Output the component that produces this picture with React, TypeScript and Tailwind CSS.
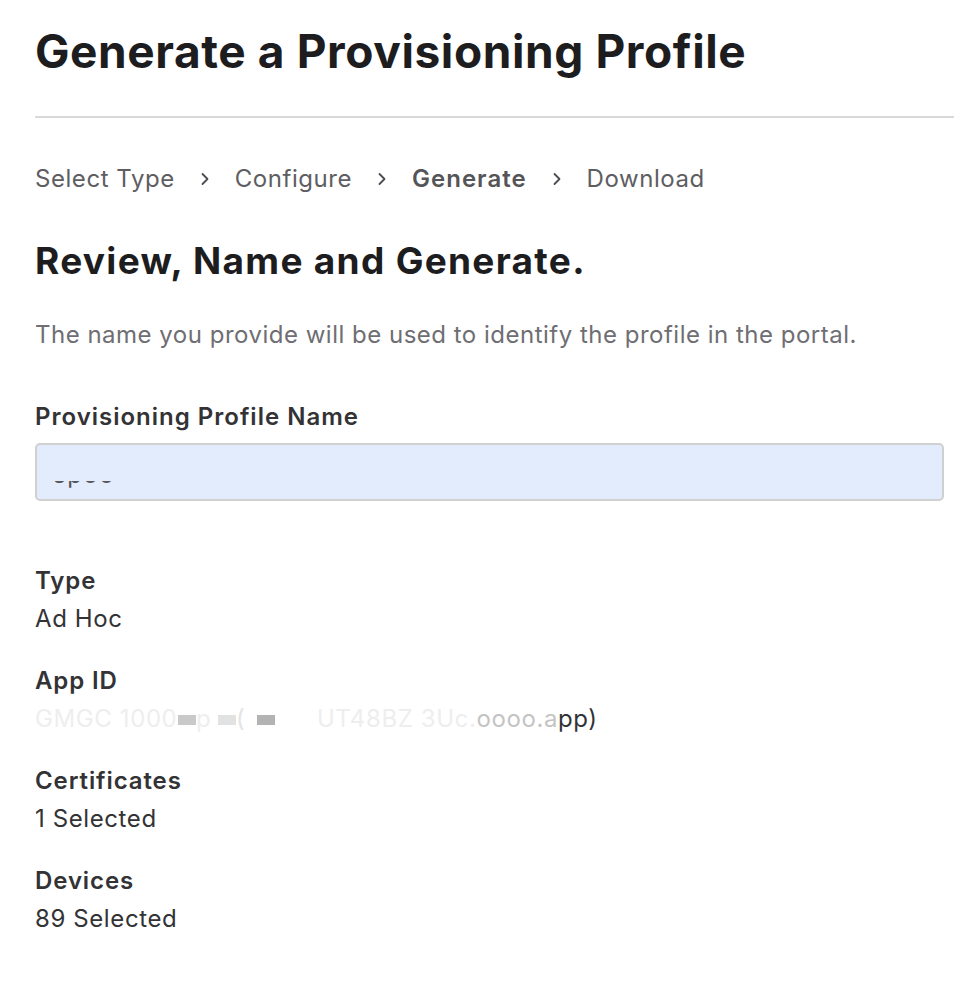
import React from "react";

function Chevron() {
  return (
    <svg width="12" height="16" viewBox="0 0 12 16" className="mx-[24px]" aria-hidden>
      <path d="M3.5 3 L8.5 8 L3.5 13" fill="none" stroke="#4a4a4f" strokeWidth="1.8" strokeLinecap="round" strokeLinejoin="round" />
    </svg>
  );
}

function Field({ label, children }: { label: string; children: React.ReactNode }) {
  return (
    <div className="flex flex-col">
      <div className="text-[24px] leading-[30px] font-semibold text-[#333336] tracking-[0.9px]">{label}</div>
      <div className="text-[24px] leading-[30px] mt-[8px] text-[#333336] tracking-[0.6px]">{children}</div>
    </div>
  );
}

function Block({ className }: { className: string }) {
  return <span className={`inline-block w-[18px] h-[10px] mt-[2px] ${className}`} />;
}

export default function App() {
  return (
    <div className="w-[954px] h-[982px] bg-white overflow-hidden pl-[35px]" style={{ fontFamily: "Inter, 'Noto Sans', sans-serif" }}>
      <h1 className="pt-[23px] text-[46px] leading-[56px] font-bold text-[#1d1d1f] tracking-[0.6px]">Generate a Provisioning Profile</h1>
      <div className="mt-[37px] h-[2px] bg-[#d9d9d9]" />
      <div className="mt-[46px] flex items-center text-[24px] leading-[30px] text-[#5e5e62] tracking-[0.55px]">
        <span>Select Type</span>
        <Chevron />
        <span>Configure</span>
        <Chevron />
        <span className="font-semibold text-[#555558] tracking-[1px]">Generate</span>
        <Chevron />
        <span>Download</span>
      </div>
      <h2 className="mt-[45px] text-[37px] leading-[44px] font-bold text-[#1d1d1f] tracking-[1.3px]">Review, Name and Generate.</h2>
      <p className="mt-[37px] text-[24px] leading-[30px] text-[#6e6e73] tracking-[0.5px]">The name you provide will be used to identify the profile in the portal.</p>
      <div className="mt-[52px] text-[24px] leading-[30px] font-semibold text-[#333336] tracking-[1px]">Provisioning Profile Name</div>
      <div className="mt-[11px] mr-[10px] h-[58px] rounded-[5px] border-2 border-[#d0d0d0] bg-[#e3ecfd] overflow-hidden relative">
        <div className="absolute left-[16px] top-[36px] h-[11px] overflow-hidden">
          <div className="text-[24px] leading-[24px] text-[#555] tracking-[1.5px] -mt-[18px]">spoo</div>
        </div>
      </div>
      <div className="mt-[65px] flex flex-col gap-[32px]">
        <Field label="Type">Ad Hoc</Field>
        <Field label="App ID">
          <span className="inline-flex items-center whitespace-nowrap">
            <span className="inline-block w-[143px] text-[#eeeeee]">GMGC 1000</span>
            <Block className="bg-[#c9c9c9]" />
            <span className="inline-block w-[22px] text-[#eeeeee]">p</span>
            <Block className="bg-[#e2e2e2]" />
            <span className="inline-block w-[21px] text-[#e4e4e4]">(</span>
            <Block className="bg-[#b3b3b3]" />
            <span className="inline-block w-[283px] text-right text-[#eeeeee]">
              UT48BZ 3Uc.<span className="text-[#c4c4c4]">oooo.a</span>
            </span>
            <span className="text-[#333336]">pp)</span>
          </span>
        </Field>
        <Field label="Certificates">1 Selected</Field>
        <Field label="Devices">89 Selected</Field>
      </div>
    </div>
  );
}
